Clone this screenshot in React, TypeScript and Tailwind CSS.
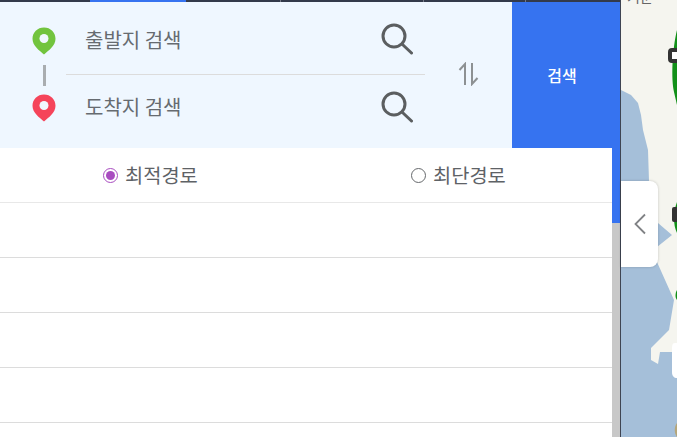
const font = { fontFamily: '"Noto Sans CJK KR", "Noto Sans", sans-serif' };

function Pin({ color }: { color: string }) {
  return (
    <svg width="24" height="28" viewBox="0 0 24 28">
      <path d="M12 0.500C5.400 0.500 0.500 5.400 0.500 11.800C0.500 19 7.500 23.500 12 27.500C16.500 23.500 23.500 19 23.500 11.800C23.500 5.400 18.600 0.500 12 0.500Z" fill={color} />
      <circle cx="12" cy="11.500" r="4.500" fill="#f0f8ff" />
    </svg>
  );
}

function SearchIcon() {
  return (
    <svg width="32" height="32" viewBox="0 0 32 32" fill="none" stroke="#5b5e60" strokeWidth="3">
      <circle cx="13" cy="13" r="11" />
      <path d="M21 21L30.500 30" strokeLinecap="round" />
    </svg>
  );
}

function SearchRow({ label, pin }: { label: string; pin: string }) {
  return (
    <div className="flex h-[67px] items-center">
      <div className="mt-[2px] w-[85px] shrink-0 pl-[32px]">
        <Pin color={pin} />
      </div>
      <div className="flex-1 text-[20px] text-[#666b70]">{label}</div>
    </div>
  );
}

function MapBackdrop() {
  return (
    <svg className="h-full w-full" viewBox="0 0 56 437" preserveAspectRatio="none">
      <rect width="56" height="437" fill="#a5bfd9" />
      <path d="M0 0H56V352H39L37 364L30 360V348L48 330L53 300L36 262V247L51 235L37 223L28 181L27 150L22 130L20 115L17 103L10 95L0 90Z" fill="#f5f5ef" />
      <path d="M56 30C51 50 50 80 53 92L56 105Z" fill="#129019" />
      <path d="M56 202C52 212 52 225 56 233Z" fill="#129019" />
      <path d="M56 290C54 293 54 298 56 300Z" fill="#129019" />
      <path d="M56 343H54C51 343 51 346 51 350V372C51 376 53 378 56 378Z" fill="#ffffff" />
      <path d="M56 423C53 427 53 433 56 437Z" fill="#b5a67a" />
      <rect x="49" y="50" width="9" height="11" rx="2" fill="#ffffff" stroke="#333333" strokeWidth="4" />
      <rect x="51" y="207" width="8" height="15" rx="2" fill="#333333" />
    </svg>
  );
}

export default function App() {
  return (
    <div className="flex h-[437px] w-[677px] overflow-hidden bg-white" style={font}>
      <div className="flex w-[620px] shrink-0 flex-col">
        {/* top tabs */}
        <div className="flex h-[2px] shrink-0 bg-[#333a4b]">
          <div className="ml-[90px] w-[96px] bg-[#3673f0]" />
          <div className="ml-[94px] w-px bg-[#777b88]" />
          <div className="ml-[142px] w-px bg-[#777b88]" />
          <div className="ml-[101px] w-px bg-[#777b88]" />
        </div>

        {/* search box */}
        <div className="flex h-[146px] shrink-0 bg-[#eff7ff]">
          <div className="relative w-[425px] shrink-0 pt-[4px]">
            <SearchRow label="출발지 검색" pin="#72c43e" />
            <SearchRow label="도착지 검색" pin="#f5445a" />
            <div className="absolute left-[43px] top-[63px] h-[21px] w-[3px] bg-[#a9adb0]" />
            <div className="absolute left-[66px] right-0 top-[72px] h-px bg-[#dcdcdc]" />
            <div className="absolute left-[381px] top-[21px]"><SearchIcon /></div>
            <div className="absolute left-[381px] top-[89px]"><SearchIcon /></div>
          </div>
          <div className="flex flex-1 items-center justify-center pb-[2px]">
            <svg width="22" height="24" viewBox="0 0 22 24" fill="none" stroke="#8d9193" strokeWidth="2">
              <path d="M7 23V2L1.500 8" />
              <path d="M14 1V22L19.500 16" />
            </svg>
          </div>
          <button className="flex w-[108px] shrink-0 items-center justify-center bg-[#3673f0] pr-[8px] text-[16px] font-medium text-white">
            검색
          </button>
        </div>

        {/* list + scrollbar */}
        <div className="flex min-h-0 flex-1">
          <div className="flex-1 bg-white">
            <div className="flex h-[55px] border-b border-[#e8e8e8] text-[19.800px] text-[#5e6266]">
              <div className="flex w-[308px] items-center pl-[103px]">
                <span className="flex h-[15px] w-[15px] items-center justify-center rounded-full border-[1.500px] border-[#a94cc0]">
                  <span className="h-[9px] w-[9px] rounded-full bg-[#a94cc0]" />
                </span>
                <span className="ml-[7px]">최적경로</span>
              </div>
              <div className="flex flex-1 items-center pl-[103px]">
                <span className="h-[15px] w-[15px] rounded-full border-[1.500px] border-[#66696c]" />
                <span className="ml-[7px]">최단경로</span>
              </div>
            </div>
            <div className="h-[55px] border-b border-[#dcdcdc]" />
            <div className="h-[55px] border-b border-[#dcdcdc]" />
            <div className="h-[55px] border-b border-[#dcdcdc]" />
            <div className="h-[55px] border-b border-[#dcdcdc]" />
          </div>
          <div className="flex w-[8px] shrink-0 flex-col bg-[#c8c8c8]">
            <div className="h-[75px] bg-[#3673f0]" />
          </div>
        </div>
      </div>

      {/* map */}
      <div className="relative flex-1 border-l border-[#3e4452]">
        <MapBackdrop />
        <div className="absolute left-[6px] top-[-11px] text-[14px] leading-none text-[#666666]">기군</div>
        <div className="absolute left-0 top-[181px] flex h-[86px] w-[37px] items-center justify-center rounded-r-[8px] bg-white shadow-[0_0_3px_rgba(0,0,0,0.2)]">
          <svg width="14" height="22" viewBox="0 0 14 22" fill="none" stroke="#808285" strokeWidth="1.800">
            <path d="M12 1.500L2.500 11L12 20.500" />
          </svg>
        </div>
      </div>
    </div>
  );
}
